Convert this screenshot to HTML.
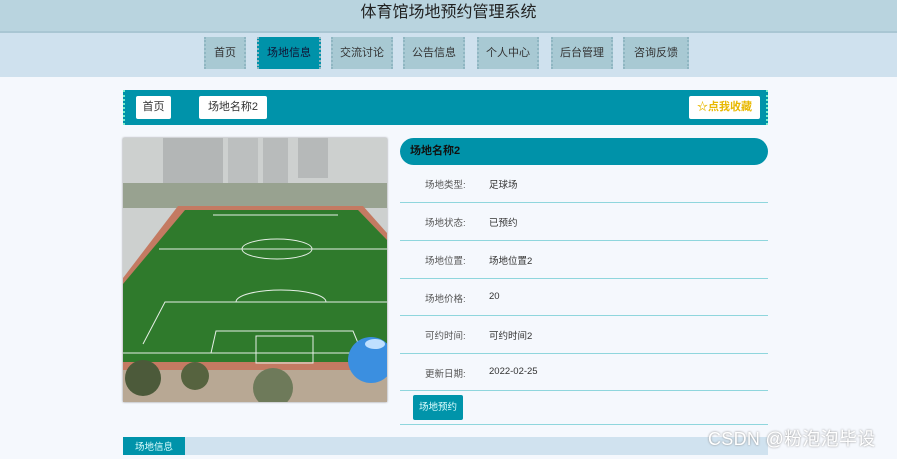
<!DOCTYPE html>
<html><head><meta charset="utf-8"><style>
*{margin:0;padding:0;box-sizing:border-box}
body{width:897px;height:455px;overflow:hidden;background:#f5f8fd;font-family:"Liberation Sans","Noto Sans CJK SC",sans-serif;position:relative;font-size:10px;color:#333}
.hdr{position:absolute;left:0;top:0;width:897px;height:33px;background:#b9d4df;border-bottom:2px solid #a9c6d3;text-align:center;font-size:16px;line-height:25px;color:#222}
.nav{position:absolute;left:0;top:33px;width:897px;height:44px;background:#cfe1ee}
.nb{position:absolute;top:4px;height:32px;background:#a8c9d3;color:#333;font-size:11px;line-height:32px;text-align:center;border-left:2px dotted #8fb6c2;border-right:2px dotted #8fb6c2}
.nb.on{background:#0092a9;color:#113}
.bc{position:absolute;left:123px;top:90px;width:645px;height:35px;background:#0093aa;border-left:2px dotted #7ec;border-right:2px dotted #7ec}
.bt{position:absolute;top:6px;height:23px;background:#fff;border-radius:2px;font-size:11px;line-height:23px;text-align:center;color:#333}
.img{position:absolute;left:123px;top:138px;width:264px;height:264px;box-shadow:0 0 2px #888}
.ph{position:absolute;left:400px;top:138px;width:368px;height:27px;background:#0092a9;border-radius:14px;font-size:11px;font-weight:bold;line-height:27px;padding-left:10px;color:#111}
.row{position:absolute;left:400px;width:368px;border-bottom:1px solid #8fd6dd;font-size:9.5px}
.row .l{position:absolute;left:25px;top:12px;color:#555}
.row .v{position:absolute;left:89px;top:12px;color:#333}
.btn{position:absolute;left:413px;top:395px;width:50px;height:25px;background:#0094aa;color:#dff;font-size:9.5px;line-height:25px;text-align:center;border-radius:2px}
.foot{position:absolute;left:123px;top:437px;width:645px;height:18px;background:#d0e2ef}
.tab{position:absolute;left:123px;top:437px;width:62px;height:18px;background:#0093aa;color:#dff;font-size:9.5px;line-height:22px;text-align:center}
.wm{position:absolute;left:708px;top:425px;font-size:18px;color:#fff;text-shadow:0 0 2px #888;letter-spacing:0.3px}
</style></head><body>
<div class="hdr">体育馆场地预约管理系统</div>
<div class="nav">
<div class="nb" style="left:204px;width:42px">首页</div>
<div class="nb on" style="left:257px;width:64px">场地信息</div>
<div class="nb" style="left:331px;width:62px">交流讨论</div>
<div class="nb" style="left:403px;width:62px">公告信息</div>
<div class="nb" style="left:477px;width:62px">个人中心</div>
<div class="nb" style="left:551px;width:62px">后台管理</div>
<div class="nb" style="left:623px;width:66px">咨询反馈</div>
</div>
<div class="bc">
<div class="bt" style="left:11px;width:35px">首页</div>
<div class="bt" style="left:74px;width:68px">场地名称2</div>
<div class="bt" style="left:564px;width:71px;color:#e8b800;font-weight:bold">☆点我收藏</div>
</div>
<svg class="img" viewBox="0 0 264 264">
<rect width="264" height="264" fill="#cdd0cf"/>
<rect x="40" y="0" width="60" height="60" fill="#b3b6b6"/>
<rect x="105" y="0" width="30" height="50" fill="#bcbfbf"/>
<rect x="140" y="0" width="25" height="45" fill="#b8bbbb"/>
<rect x="175" y="0" width="30" height="40" fill="#b6b9b9"/>
<rect x="0" y="45" width="264" height="25" fill="#98a290"/>
<polygon points="55,68 240,68 264,95 264,232 0,232 0,140" fill="#c47a62"/>
<polygon points="62,72 235,72 264,102 264,224 0,224 0,146" fill="#2f7a2c"/>
<g stroke="#e6efe6" stroke-width="1" fill="none">
<line x1="90" y1="77" x2="215" y2="77"/>
<line x1="36" y1="111" x2="264" y2="111"/>
<ellipse cx="154" cy="111" rx="35" ry="10"/>
<path d="M113,164 A45,12 0 0 1 203,164"/>
<polyline points="20,206 42,164 264,164"/>
<polyline points="88,215 93,193 230,193 235,205"/>
<rect x="133" y="198" width="57" height="27"/>
<line x1="0" y1="215" x2="264" y2="215"/>
</g>
<rect x="0" y="232" width="264" height="32" fill="#b8a894"/>
<circle cx="20" cy="240" r="18" fill="#4c5a3a"/>
<circle cx="72" cy="238" r="14" fill="#56633f"/>
<circle cx="150" cy="250" r="20" fill="#6e7a5a"/>
<circle cx="248" cy="222" r="23" fill="#3b8fe0"/>
<ellipse cx="252" cy="206" rx="10" ry="5" fill="#bfe0ff"/>
</svg>
<div class="ph">场地名称2</div>
<div class="row" style="top:165px;height:38px"><span class="l">场地类型:</span><span class="v">足球场</span></div>
<div class="row" style="top:203px;height:38px"><span class="l">场地状态:</span><span class="v">已预约</span></div>
<div class="row" style="top:241px;height:38px"><span class="l">场地位置:</span><span class="v">场地位置2</span></div>
<div class="row" style="top:279px;height:37px"><span class="l">场地价格:</span><span class="v">20</span></div>
<div class="row" style="top:316px;height:38px"><span class="l">可约时间:</span><span class="v">可约时间2</span></div>
<div class="row" style="top:354px;height:37px"><span class="l">更新日期:</span><span class="v">2022-02-25</span></div>
<div class="row" style="top:391px;height:34px"></div>
<div class="btn">场地预约</div>
<div class="foot"></div>
<div class="tab">场地信息</div>
<div class="wm">CSDN @粉泡泡毕设</div>
</body></html>
